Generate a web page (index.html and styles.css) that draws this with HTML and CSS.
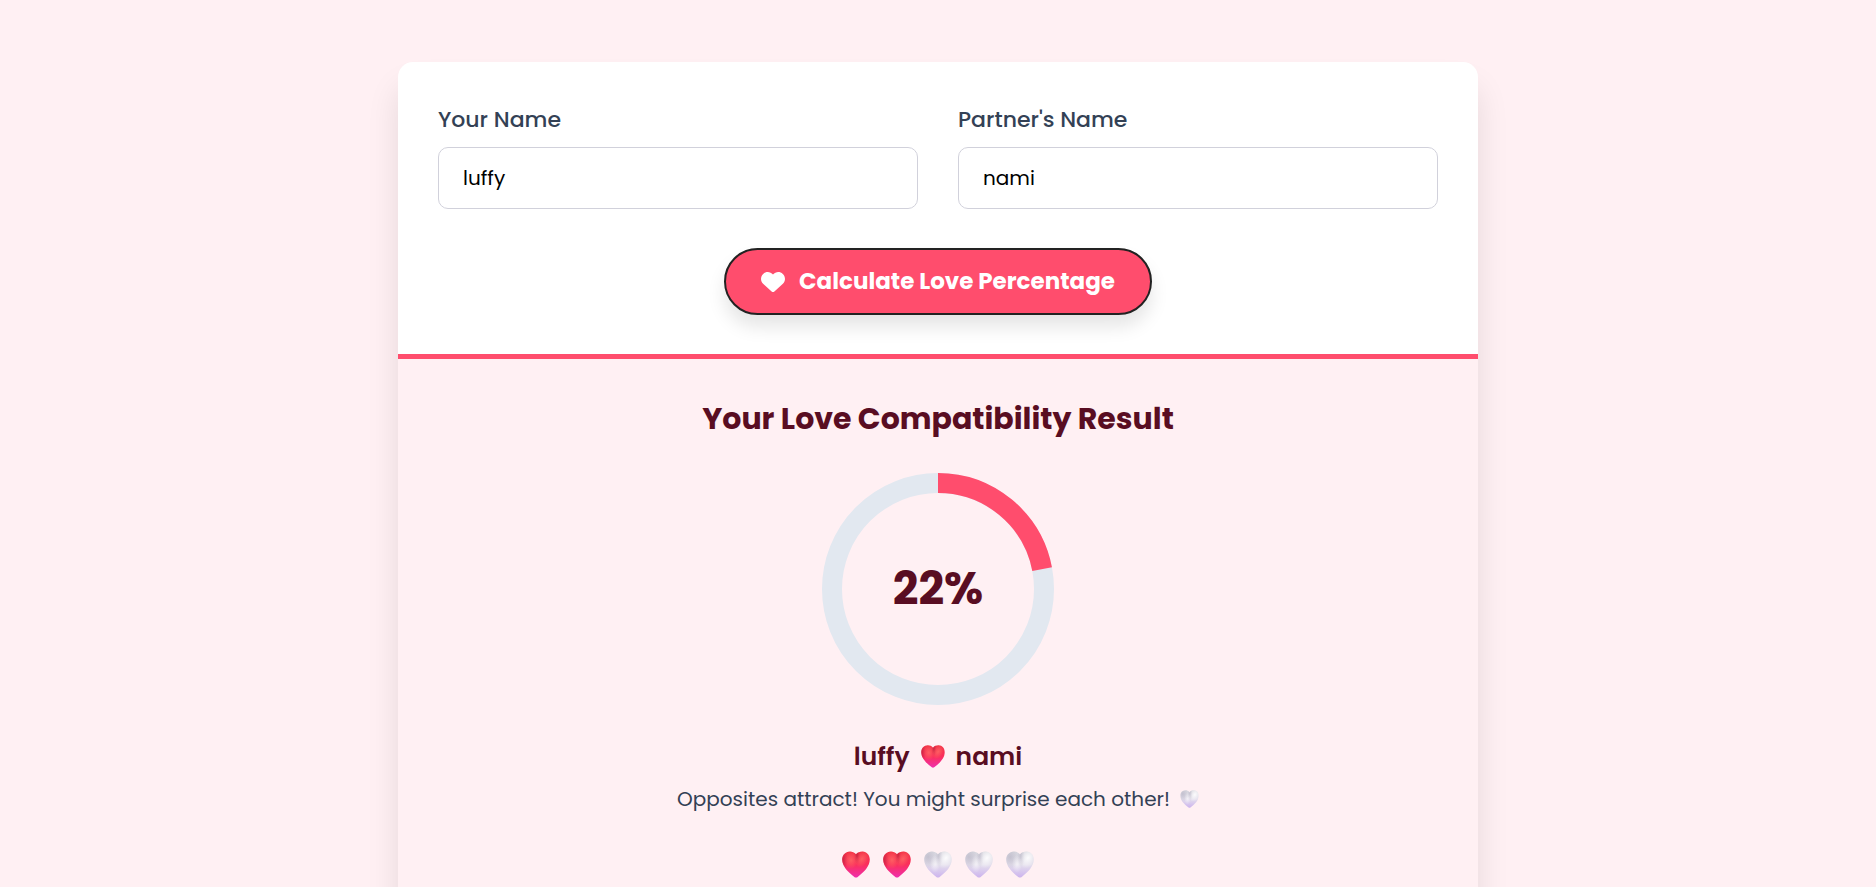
FILE: index.html
```html
<!DOCTYPE html>
<html lang="en">
<head>
    <meta charset="UTF-8">
    <meta name="viewport" content="width=device-width, initial-scale=1.0">
    <title>Love Calculator</title>
    <link rel="stylesheet" href="styles.css">
</head>
<body>
    <!-- Shared heart shapes -->
    <svg class="defs" width="0" height="0" aria-hidden="true">
        <defs>
            <linearGradient id="redFill" x1="0" y1="0" x2="0" y2="1">
                <stop offset="0" stop-color="#f23344"/>
                <stop offset="0.5" stop-color="#fb2f5c"/>
                <stop offset="1" stop-color="#ee2fb0"/>
            </linearGradient>
            <linearGradient id="whiteFill" x1="0" y1="0" x2="0" y2="1">
                <stop offset="0" stop-color="#dcdce2"/>
                <stop offset="0.5" stop-color="#e4dfec"/>
                <stop offset="1" stop-color="#ccb2ee"/>
            </linearGradient>
            <radialGradient id="redShine">
                <stop offset="0" stop-color="#ff6a66" stop-opacity="0.8"/>
                <stop offset="1" stop-color="#ff6a66" stop-opacity="0"/>
            </radialGradient>
            <radialGradient id="whiteShine">
                <stop offset="0" stop-color="#ffffff" stop-opacity="0.9"/>
                <stop offset="1" stop-color="#ffffff" stop-opacity="0"/>
            </radialGradient>
            <radialGradient id="redShade">
                <stop offset="0" stop-color="#b8203c" stop-opacity="0.7"/>
                <stop offset="1" stop-color="#b8203c" stop-opacity="0"/>
            </radialGradient>
            <radialGradient id="whiteShade">
                <stop offset="0" stop-color="#a9a5b8" stop-opacity="0.5"/>
                <stop offset="1" stop-color="#a9a5b8" stop-opacity="0"/>
            </radialGradient>
            <path id="heartShape" d="M14 3.2C12.2 1.2 10 0.3 7.8 0.4C3.4 0.5 0.2 4 0.2 8.6C0.2 15.4 6.2 21.6 12.6 26.2Q14 27 15.4 26.2C21.8 21.6 27.8 15.4 27.8 8.6C27.8 4 24.8 0.5 20.6 0.4C18 0.3 15.6 1.2 14 3.2Z"/>
            <clipPath id="heartClip"><use href="#heartShape"/></clipPath>
            <symbol id="redHeart" viewBox="0 0 28 27">
                <g clip-path="url(#heartClip)">
                    <rect width="28" height="27" fill="url(#redFill)"/>
                    <ellipse cx="0" cy="9" rx="6" ry="12" fill="url(#redShade)"/>
                    <ellipse cx="15" cy="5" rx="3" ry="8" fill="url(#redShade)"/>
                    <ellipse cx="9" cy="9" rx="7" ry="9" fill="url(#redShine)"/>
                    <ellipse cx="20" cy="8" rx="6" ry="9" fill="url(#redShine)" transform="rotate(30 20 8)"/>
                </g>
            </symbol>
            <symbol id="whiteHeart" viewBox="0 0 28 27">
                <g clip-path="url(#heartClip)">
                    <rect width="28" height="27" fill="url(#whiteFill)"/>
                    <ellipse cx="4" cy="6" rx="10" ry="12" fill="url(#whiteShade)"/>
                    <ellipse cx="15" cy="6" rx="4" ry="10" fill="url(#whiteShade)"/>
                    <ellipse cx="11" cy="13" rx="5" ry="9" fill="url(#whiteShine)" opacity="0.6"/>
                    <ellipse cx="22" cy="7" rx="8" ry="11" fill="url(#whiteShine)" transform="rotate(30 22 7)"/>
                </g>
            </symbol>
        </defs>
    </svg>

    <main class="card">
        <form class="form">
            <div class="fields">
                <div class="field">
                    <label for="yourName">Your Name</label>
                    <input type="text" id="yourName" value="luffy">
                </div>
                <div class="field">
                    <label for="partnerName">Partner's Name</label>
                    <input type="text" id="partnerName" value="nami">
                </div>
            </div>
            <button type="button" class="calculate">
                <svg class="button-heart" viewBox="0 0 24 20" aria-hidden="true">
                    <path d="M12 2.6C9.4-.6 5-.8 2.2 1.9C-.7 4.7-.7 9 2.1 11.7L10.6 19.4Q12 20.6 13.4 19.4L21.9 11.7C24.7 9 24.7 4.7 21.8 1.9C19-.8 14.6-.6 12 2.6Z" fill="currentColor"/>
                </svg>
                Calculate Love Percentage
            </button>
        </form>

        <section class="result">
            <h2>Your Love Compatibility Result</h2>
            <div class="meter">
                <svg viewBox="0 0 240 240" aria-hidden="true">
                    <circle class="track" cx="120" cy="120" r="106" pathLength="100"/>
                    <circle class="progress" cx="120" cy="120" r="106" pathLength="100" stroke-dasharray="22 100" transform="rotate(-90 120 120)"/>
                </svg>
                <span class="percent">22%</span>
            </div>
            <p class="names">
                <span>luffy</span>
                <svg><use href="#redHeart"/></svg>
                <span>nami</span>
            </p>
            <p class="message">
                <span>Opposites attract! You might surprise each other!</span>
                <svg><use href="#whiteHeart"/></svg>
            </p>
            <div class="rating">
                <svg><use href="#redHeart"/></svg>
                <svg><use href="#redHeart"/></svg>
                <svg><use href="#whiteHeart"/></svg>
                <svg><use href="#whiteHeart"/></svg>
                <svg><use href="#whiteHeart"/></svg>
            </div>
        </section>
    </main>
</body>
</html>
```
FILE: styles.css
```css
* {
    box-sizing: border-box;
}
body {
    margin: 0;
    padding: 62px 20px;
    font-family: Poppins, Inter, sans-serif;
    font-size: 20px;
    line-height: 30px;
    color: #334155;
    background-color: #fff0f3;
}
h2,
p {
    margin: 0;
}
.defs {
    position: absolute;
}
.card {
    max-width: 1080px;
    margin: 0 auto;
    border-radius: 15px;
    overflow: hidden;
    background-color: white;
    box-shadow: 0 25px 32px rgba(0, 0, 0, 0.1);
}

/* Form */
.form {
    display: flex;
    flex-direction: column;
    align-items: center;
    gap: 39px;
    padding: 40px 40px 39px;
}
.fields {
    display: grid;
    grid-template-columns: 1fr 1fr;
    gap: 40px;
    width: 100%;
}
.field label {
    display: block;
    margin-bottom: 10px;
    font-size: 22px;
    line-height: 35px;
    font-weight: 500;
}
.field input {
    display: block;
    width: 100%;
    height: 62px;
    padding: 0 24px;
    border: 1px solid #d1d1db;
    border-radius: 10px;
    font: inherit;
    color: black;
    background-color: white;
}
.calculate {
    display: flex;
    align-items: center;
    gap: 14px;
    padding: 14px 35px;
    border: 2px solid #222;
    border-radius: 40px;
    font: inherit;
    font-size: 23px;
    line-height: 35px;
    font-weight: 700;
    color: white;
    background-color: #ff4d6d;
    box-shadow: 0 12px 18px rgba(0, 0, 0, 0.1);
    cursor: pointer;
}
.button-heart {
    width: 24px;
    height: 20px;
}

/* Result */
.result {
    display: flex;
    flex-direction: column;
    align-items: center;
    padding: 40px;
    border-top: 5px solid #ff4d6d;
    background-color: #fff0f3;
}
.result h2 {
    font-size: 30px;
    line-height: 40px;
    font-weight: 700;
    color: #590d22;
}
.meter {
    display: grid;
    place-items: center;
    width: 240px;
    height: 240px;
    margin: 30px 0;
}
.meter > * {
    grid-area: 1 / 1;
}
.meter circle {
    fill: none;
    stroke-width: 20;
}
.meter .track {
    stroke: #e2e8f0;
}
.meter .progress {
    stroke: #ff4d6d;
}
.percent {
    font-size: 45px;
    line-height: 50px;
    font-weight: 700;
    color: #590d22;
}
.names,
.message,
.rating {
    display: flex;
    align-items: center;
}
.names {
    gap: 11px;
    margin-bottom: 10px;
    font-size: 25px;
    line-height: 35px;
    font-weight: 600;
    color: #590d22;
}
.names svg {
    width: 24px;
    height: 23px;
}
.message {
    gap: 10px;
    margin-bottom: 30px;
}
.message svg {
    width: 19px;
    height: 18px;
}
.rating {
    gap: 13px;
    height: 40px;
}
.rating svg {
    width: 28px;
    height: 27px;
}
```
